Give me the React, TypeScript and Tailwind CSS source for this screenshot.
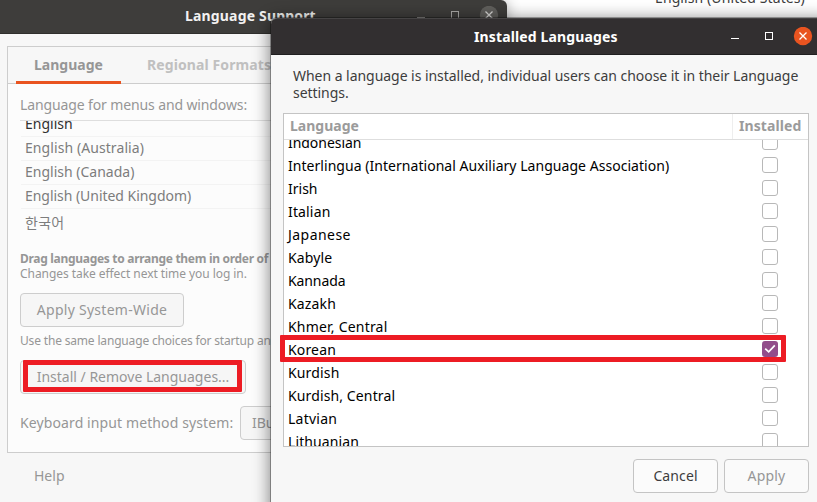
import React from "react";

const languages = [
  { name: "Indonesian", installed: false, tracking: "tracking-[-0.05px]" },
  { name: "Interlingua (International Auxiliary Language Association)", installed: false, tracking: "tracking-[0.04px]" },
  { name: "Irish", installed: false, tracking: "tracking-[0px]" },
  { name: "Italian", installed: false, tracking: "tracking-[0.15px]" },
  { name: "Japanese", installed: false, tracking: "tracking-[0.45px]" },
  { name: "Kabyle", installed: false, tracking: "tracking-[0.15px]" },
  { name: "Kannada", installed: false, tracking: "tracking-[-0.1px]" },
  { name: "Kazakh", installed: false, tracking: "tracking-[0.15px]" },
  { name: "Khmer, Central", installed: false, tracking: "tracking-[0.2px]" },
  { name: "Korean", installed: true, tracking: "tracking-[0.15px]" },
  { name: "Kurdish", installed: false, tracking: "tracking-[0.15px]" },
  { name: "Kurdish, Central", installed: false, tracking: "tracking-[0.12px]" },
  { name: "Latvian", installed: false, tracking: "tracking-[0.25px]" },
  { name: "Lithuanian", installed: false, tracking: "tracking-[0.1px]" },
];

function WindowControls({ active }: { active: boolean }) {
  return (
    <svg width="84" height="20" viewBox="0 0 84 20" fill="none" className="shrink-0">
      <path d="M2 11.5h8" stroke={active ? "#fff" : "#aaa9a7"} />
      <rect x="36.5" y="5.5" width="7" height="7" stroke={active ? "#fff" : "#aaa9a7"} />
      <circle cx="74" cy="9" r="9.2" fill={active ? "#e95420" : "#605f5c"} />
      <path d="m70.5 5.5 7 7m0-7-7 7" stroke={active ? "#fff" : "#d8d7d5"} strokeWidth="1.3" />
    </svg>
  );
}

function Checkbox({ checked }: { checked: boolean }) {
  if (checked) {
    return (
      <span className="mb-0.5 flex size-4 shrink-0 items-center justify-center rounded-[3px] bg-[#924d8b]">
        <svg width="16" height="16" viewBox="0 0 16 16" fill="none">
          <path d="m3.2 7.6 3.5 3.3 6.1-6.5" stroke="#fff" strokeWidth="1.7" />
        </svg>
      </span>
    );
  }
  return <span className="mb-0.5 size-4 shrink-0 rounded-[3px] border border-[#b8b8b8] bg-white" />;
}

function LanguageSupport() {
  return (
    <div className="absolute top-0 left-0 flex h-[502px] w-[507px] flex-col rounded-tr-[6px] bg-[#f7f7f7] text-[#969696] shadow-[0_0_14px_rgba(0,0,0,0.3)]">
      <header className="flex h-[34px] shrink-0 items-start rounded-tr-[6px] border-b border-[#302f2d] bg-[#3e3d3b] pl-[185px] text-[#f2f1f0]">
        <h1 className="w-[230px] pt-[6px] font-bold leading-5 tracking-[0.17px] whitespace-nowrap">Language Support</h1>
        <div className="pt-[6px]">
          <WindowControls active={false} />
        </div>
      </header>
      <main className="mt-3 ml-[7px] h-[407px] shrink-0 border border-[#cdcdcd] bg-[#fcfcfc]">
        <nav className="flex h-[37px] border-b border-[#cdcdcd] bg-[#f7f7f7] pl-2 font-bold leading-5">
          <span className="-mb-px h-[37px] w-[105px] border-b-[3px] border-[#e95420] pt-2 pl-[18px]">Language</span>
          <span className="pt-2 pl-[26px] tracking-[0.1px] whitespace-nowrap text-[#c0c0c0]">Regional Formats</span>
        </nav>
        <div className="pl-3">
          <p className="h-9 pt-[11px] leading-5 tracking-[-0.12px]">Language for menus and windows:</p>
          <div className="h-[123px] overflow-hidden border-t border-[#dedede] pl-px text-[#7d7d7d]">
            <div className="flex h-4 items-end border-b border-[#f3f3f3] pl-1 leading-6 text-[#303030]">English</div>
            <p className="h-6 border-b border-[#f3f3f3] pl-1 leading-[21px] tracking-[0.08px]">English (Australia)</p>
            <p className="h-6 border-b border-[#f3f3f3] pl-1 leading-[21px]">English (Canada)</p>
            <p className="h-6 border-b border-[#f3f3f3] pl-1 leading-[21px] tracking-[-0.04px]">English (United Kingdom)</p>
            <p className="pt-[2px] pl-1 leading-6 tracking-[0.3px]">한국어</p>
          </div>
          <div className="pt-2 text-[12px] leading-[15px] whitespace-nowrap">
            <p className="font-bold tracking-[-0.3px]">Drag languages to arrange them in order of preference.</p>
            <p className="tracking-[-0.06px]">Changes take effect next time you log in.</p>
          </div>
          <button className="mt-3 block h-[34px] w-[164px] rounded border border-[#cdcdcd] bg-[#f6f6f6] pb-px tracking-[0.27px] whitespace-nowrap">Apply System-Wide</button>
          <p className="pt-[6px] text-[12px] leading-[15px] tracking-[-0.17px] whitespace-nowrap">Use the same language choices for startup and the login screen.</p>
          <button className="mt-3 block h-[34px] w-[226px] rounded border border-[#cdcdcd] bg-[#f6f6f6] pb-px whitespace-nowrap">Install / Remove Languages...</button>
          <div className="mt-3 flex h-[34px] items-center">
            <span className="w-[220px] pb-0.5 tracking-[0.11px] whitespace-nowrap">Keyboard input method system:</span>
            <button className="h-[34px] w-24 rounded border border-[#cdcdcd] bg-[#f6f6f6] pb-px pl-[11px] text-left">IBus</button>
          </div>
        </div>
      </main>
      <footer className="pt-[13px] pl-[34px] leading-5">Help</footer>
      <div className="absolute top-[360px] left-[23px] h-8 w-[219px] rounded-[1px] border-[5px] border-[#ed1c24]" />
    </div>
  );
}

function InstalledLanguages() {
  return (
    <div className="absolute top-[18px] left-[271px] flex h-[520px] w-[560px] flex-col rounded-tl-[6px] bg-[#f7f7f7] shadow-[0_0_0_1px_rgba(0,0,0,0.3),0_2px_16px_2px_rgba(0,0,0,0.45)]">
      <header className="flex h-[37px] shrink-0 items-start rounded-tl-[6px] border-t border-b border-t-[#454344] border-b-[#201f20] bg-[#322f30] pt-2 pl-[203px] text-white">
        <h2 className="w-[255px] font-bold leading-5 tracking-[0.13px] whitespace-nowrap">Installed Languages</h2>
        <WindowControls active />
      </header>
      <p className="mt-3 ml-[22px] w-[520px] shrink-0 leading-[17px] tracking-[-0.04px] whitespace-nowrap text-[#3d3d3d]">
        When a language is installed, individual users can choose it in their Language
        <br />
        settings.
      </p>
      <section className="mt-3 ml-3 h-[334px] w-[526px] shrink-0 overflow-hidden border border-[#c4c4c4] bg-white">
        <div className="flex h-[26px] border-b border-[#dedede] font-bold leading-6 text-[#9b9b9b]">
          <span className="w-[449px] border-r border-[#eeeeee] pl-[6px]">Language</span>
          <span className="pl-[6px] tracking-[0.1px]">Installed</span>
        </div>
        <ul className="h-[306px] overflow-hidden text-black">
          {languages.map((language, index) => (
            <li key={language.name} className={`flex h-[23px] items-center pl-1 ${index === 0 ? "-mt-[9px]" : ""}`}>
              <span className={`w-[474px] whitespace-nowrap ${language.tracking}`}>{language.name}</span>
              <Checkbox checked={language.installed} />
            </li>
          ))}
        </ul>
      </section>
      <footer className="mt-3 flex gap-[6px] pl-[362px]">
        <button className="h-[34px] w-[85px] rounded border border-[#c4c4c4] bg-[#fbfbfb] pb-0.5 tracking-[0.1px] text-[#3d3d3d]">Cancel</button>
        <button className="h-[34px] w-[85px] rounded border border-[#c4c4c4] bg-[#fafafa] pb-0.5 tracking-[0.2px] text-[#969696]">Apply</button>
      </footer>
      <div className="absolute top-[317px] left-[9px] h-[27px] w-[506px] rounded-[1px] border-[5px] border-[#ed1c24]" />
    </div>
  );
}

export default function App() {
  return (
    <div className="relative h-[502px] w-[817px] overflow-hidden bg-white font-['Noto_Sans','Noto_Sans_CJK_KR',sans-serif] text-[14px]">
      <p className="absolute -top-3 left-[655px] leading-5 tracking-[0.1px] whitespace-nowrap text-[#3d3d3d]">English (United States)</p>
      <LanguageSupport />
      <InstalledLanguages />
    </div>
  );
}
